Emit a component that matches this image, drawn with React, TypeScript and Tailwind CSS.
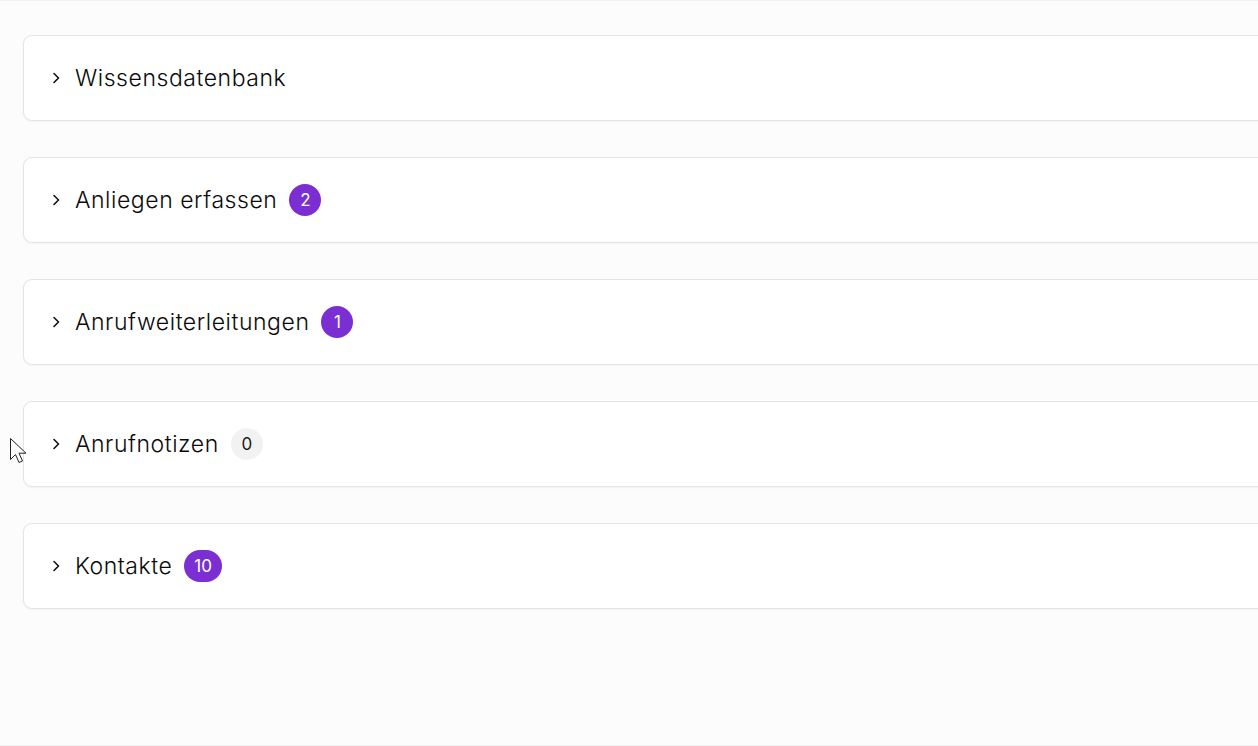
import React from "react";

interface Section {
  title: string;
  count?: number;
}

const sections: Section[] = [
  { title: "Wissensdatenbank" },
  { title: "Anliegen erfassen", count: 2 },
  { title: "Anrufweiterleitungen", count: 1 },
  { title: "Anrufnotizen", count: 0 },
  { title: "Kontakte", count: 10 },
];

const Chevron = () => (
  <svg width="8" height="12" viewBox="0 0 8 12" fill="none" className="shrink-0">
    <path d="M2 1.5 6.5 6 2 10.5" stroke="#111" strokeWidth="1.6" strokeLinecap="round" strokeLinejoin="round" />
  </svg>
);

const Badge = ({ count }: { count: number }) => {
  const empty = count === 0;
  return (
    <span
      className={`inline-flex h-8 min-w-8 items-center justify-center rounded-full px-[10px] text-[17px] leading-none ${
        empty ? "bg-[#f3f2f2] text-[#1a1a1a]" : "bg-[#7b2fd3] text-white"
      }`}
    >
      {count}
    </span>
  );
};

export default function App() {
  return (
    <div className="relative h-[746px] w-[1258px] overflow-hidden bg-[#fcfcfc] font-['Inter',sans-serif]">
      {/* tail of the card above */}
      <div className="h-px w-full bg-[#f1f1f1]" />

      <div className="flex flex-col gap-[36px] pl-[23px] pt-[34px]">
        {sections.map((s) => (
          <div
            key={s.title}
            className="flex h-[86px] w-[1300px] items-center gap-[15px] rounded-[9px] border border-[#e4e4e4] bg-white pl-[28px] shadow-[0_1px_2px_rgba(0,0,0,0.04)]"
          >
            <Chevron />
            <div className="flex items-center gap-3">
              <span className="text-[23px] font-light tracking-[0.55px] text-[#0a0a0a]">{s.title}</span>
              {s.count !== undefined && <Badge count={s.count} />}
            </div>
          </div>
        ))}
      </div>

      <div className="absolute bottom-0 left-0 h-px w-full bg-[#efefef]" />

      {/* mouse pointer */}
      <svg className="absolute left-[9px] top-[437px]" width="20" height="29" viewBox="0 0 20 29" fill="none">
        <path
          d="M1.5 1.5v21l5-5 3.5 8 3.5-1.5-3.5-7.8h7z"
          fill="#fff"
          stroke="#222"
          strokeWidth="1"
          strokeLinejoin="round"
        />
      </svg>
    </div>
  );
}
